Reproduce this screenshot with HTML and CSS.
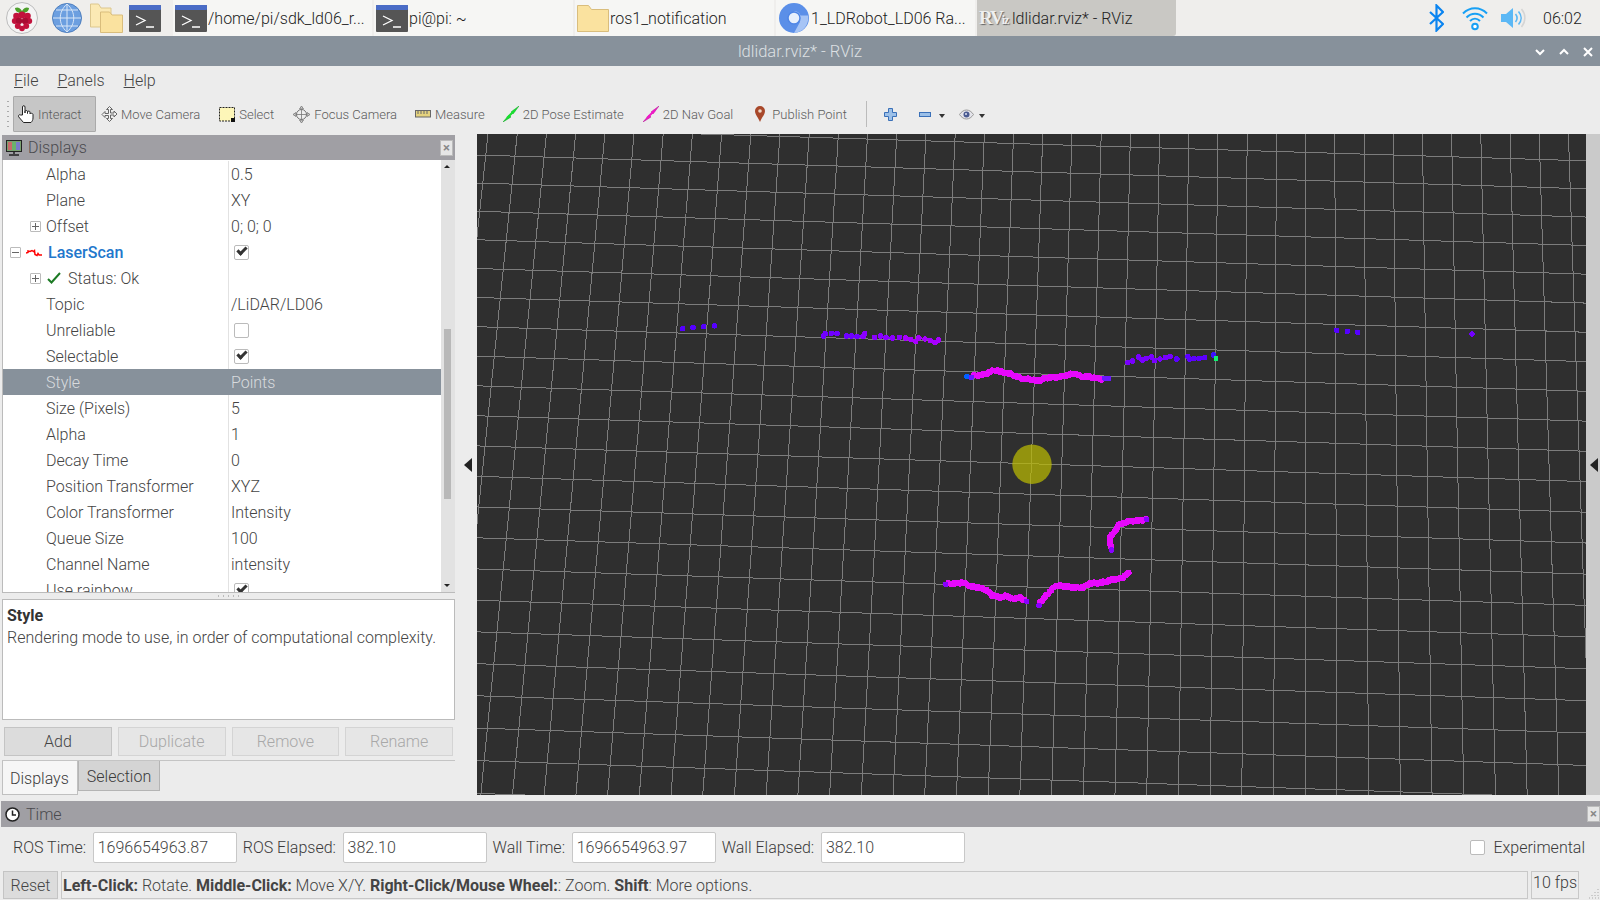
FILE: index.html
```html
<!DOCTYPE html>
<html lang="en">
<head>
    <meta charset="UTF-8">
    <title>ldlidar.rviz* - RViz</title>
    <link rel="stylesheet" href="styles.css">
</head>
<body>

<svg class="defs" width="0" height="0">
    <symbol id="term" viewBox="0 0 32 27">
        <rect width="32" height="27" rx="1" fill="#555"/>
        <rect width="32" height="5" rx="1" fill="#4a6cc6"/>
        <path d="M7 11l9 4.5-9 4.5M17 22h8" fill="none" stroke="#fff" stroke-width="1.3"/>
    </symbol>
    <symbol id="folder" viewBox="0 0 32 27">
        <path d="M.5 26.5V.5h11l3 4h17v22z" fill="#fae29f" stroke="#d9bd7c"/>
    </symbol>
</svg>

<div class="taskbar">
    <div class="launchers">
        <svg class="launch-menu" width="34" height="34" viewBox="0 0 34 34">
            <circle cx="17" cy="17" r="15.5" fill="#f4f4f4" stroke="#bdbdbd"/>
            <path d="M17 10c-3-5-6-3-7-3 0 3 3 5 7 5 4 0 7-2 7-5-1 0-4-2-7 3z" fill="#4ea02c"/>
            <circle cx="17" cy="14" r="3.6" fill="#c2123c"/>
            <circle cx="11.5" cy="15" r="3.3" fill="#c2123c"/>
            <circle cx="22.5" cy="15" r="3.3" fill="#c2123c"/>
            <circle cx="9.8" cy="20" r="3" fill="#c2123c"/>
            <circle cx="24.2" cy="20" r="3" fill="#c2123c"/>
            <circle cx="14" cy="20" r="3.2" fill="#a80d33"/>
            <circle cx="20" cy="20" r="3.2" fill="#a80d33"/>
            <circle cx="12.8" cy="25" r="3" fill="#c2123c"/>
            <circle cx="21.2" cy="25" r="3" fill="#c2123c"/>
            <circle cx="17" cy="27.5" r="2.8" fill="#c2123c"/>
        </svg>
        <svg class="launch-globe" width="30" height="30" viewBox="0 0 30 30">
            <circle cx="15" cy="15" r="14.5" fill="#6c9fe0" stroke="#4f7fbd"/>
            <path d="M1 15h28M4 7h22M4 23h22M15 1v28M15 1c-9 8-9 20 0 28M15 1c9 8 9 20 0 28" fill="none" stroke="#d8e6f7" stroke-width="1"/>
        </svg>
        <svg class="launch-files" width="33" height="30" viewBox="0 0 33 30">
            <path d="M.5 24V1h8l2.500 4h10v19z" fill="#fbe9b4" stroke="#dcc78e"/>
            <path d="M10.500 29.500V9h9l2.500 3h10.500v17.500z" fill="#fae29f" stroke="#d9bd7c"/>
        </svg>
        <svg class="launch-term" width="32" height="27"><use href="#term"/></svg>
    </div>
    <div class="task">
        <svg width="32" height="27"><use href="#term"/></svg>
        <span class="task-name">/home/pi/sdk_ld06_r...</span>
    </div>
    <div class="task">
        <svg width="32" height="27"><use href="#term"/></svg>
        <span class="task-name">pi@pi: ~</span>
    </div>
    <div class="task">
        <svg width="32" height="27"><use href="#folder"/></svg>
        <span class="task-name">ros1_notification</span>
    </div>
    <div class="task">
        <svg class="chrome-icon" width="30" height="30" viewBox="0 0 30 30">
            <circle cx="15" cy="15" r="15" fill="#5b8fe8"/>
            <path d="M15 8a7 7 0 0 1 6.500 4.500H29A15 15 0 0 1 15 30l6-11z" fill="#a6c4f5"/>
            <circle cx="15" cy="15" r="6" fill="#e8f0fc" stroke="#4f86e6" stroke-width="1.500"/>
        </svg>
        <span class="task-name">1_LDRobot_LD06 Ra...</span>
    </div>
    <div class="task task-active">
        <span class="rviz-mark">RV<small>iz</small></span>
        <span class="task-name">ldlidar.rviz* - RViz</span>
    </div>
    <div class="tray">
        <svg class="tray-bt" width="15" height="28" viewBox="0 0 15 28">
            <path d="M1 8l13 12-6.500 6.500V1.500L14 8 1 20" fill="none" stroke="#0a84f0" stroke-width="2.200"/>
        </svg>
        <svg class="tray-wifi" width="26" height="26" viewBox="0 0 26 26">
            <path d="M1 8.500c7-7 17-7 24 0M4.500 12.500c5-5 12-5 17 0M8 16c3-3 7-3 10 0" fill="none" stroke="#18a0f5" stroke-width="2"/>
            <circle cx="13" cy="21.500" r="2.800" fill="#fff" stroke="#18a0f5" stroke-width="2"/>
        </svg>
        <svg class="tray-vol" width="26" height="26" viewBox="0 0 26 26">
            <path d="M1 9h5l7-6v20l-7-6H1z" fill="#5cb8f5"/>
            <path d="M15.500 9c2 2.500 2 5.500 0 8M18.500 6.500c3.500 4 3.500 9 0 13" fill="none" stroke="#5cb8f5" stroke-width="1.600"/>
            <path d="M21.500 4c4.500 5.500 4.500 12.500 0 18" fill="none" stroke="#d5d5d5" stroke-width="1.600"/>
        </svg>
        <span class="clock">06:02</span>
    </div>
</div>

<div class="titlebar">
    <span>ldlidar.rviz* - RViz</span>
    <div class="wm-buttons">
        <svg width="12" height="10" viewBox="0 0 12 10"><path d="M2 3l4 4 4-4" fill="none" stroke="#fff" stroke-width="2"/></svg>
        <svg width="12" height="10" viewBox="0 0 12 10"><path d="M2 7l4-4 4 4" fill="none" stroke="#fff" stroke-width="2"/></svg>
        <svg width="12" height="10" viewBox="0 0 12 10"><path d="M2 1l8 8M10 1l-8 8" fill="none" stroke="#fff" stroke-width="2"/></svg>
    </div>
</div>

<div class="menubar">
    <span><u>F</u>ile</span>
    <span><u>P</u>anels</span>
    <span><u>H</u>elp</span>
</div>

<div class="toolbar">
    <div class="grip"></div>
    <div class="tool tool-on">
        <svg width="17" height="18" viewBox="0 0 17 18"><path d="M4.500 10V2c0-1.800 2.500-1.800 2.500 0v6V6.500c0-1.300 2.500-1.300 2.500 0V8.500 7c0-1.200 2.500-1.200 2.500 0v2c0-1 3-1 3 .5v3.500c0 2-1 3.500-2 4.500H5.500L.8 12c-1-1.500.7-3 1.700-2z" fill="#fff" stroke="#222" stroke-width="1"/></svg>
        Interact
    </div>
    <div class="tool tool-move">
        <svg width="17" height="17" viewBox="0 0 17 17"><path d="M8.500.5l3 3h-2v3.500h3.500v-2l3 3-3 3v-2H9.500v3.500h2l-3 3-3-3h2V9.500H4v2l-3-3 3-3v2h3.500V3.500h-2z" fill="#f2f2f2" stroke="#666"/></svg>
        Move Camera
    </div>
    <div class="tool tool-select">
        <svg width="16" height="15" viewBox="0 0 16 15"><rect x=".5" y=".5" width="15" height="13.500" fill="#fdf6b8" stroke="#222" stroke-dasharray="2 1"/><rect x="12" y="11" width="4" height="4" fill="#111"/></svg>
        Select
    </div>
    <div class="tool tool-focus">
        <svg width="17" height="17" viewBox="0 0 17 17"><circle cx="8.500" cy="8.500" r="5" fill="#eee" stroke="#777"/><path d="M8.500 0l2 3h-4zM8.500 17l2-3h-4zM0 8.500l3-2v4zM17 8.500l-3-2v4zM8.500 3v11M3 8.500h11" fill="#ccc" stroke="#777" stroke-width=".8"/></svg>
        Focus Camera
    </div>
    <div class="tool tool-measure">
        <svg width="16" height="8" viewBox="0 0 16 8"><rect x=".5" y=".5" width="15" height="6.500" fill="#e4d27e" stroke="#666"/><path d="M3 1v3M6 1v3M9 1v3M12 1v3" stroke="#666"/></svg>
        Measure
    </div>
    <div class="tool tool-pose">
        <svg width="16" height="16" viewBox="0 0 16 16"><path d="M0 16l6-7 2 2zM16 0l-8 6 2 2z" fill="#18e030" stroke="#0fa020" stroke-width=".5"/><path d="M4 12l8-8" stroke="#18e030" stroke-width="2"/></svg>
        2D Pose Estimate
    </div>
    <div class="tool tool-nav">
        <svg width="16" height="16" viewBox="0 0 16 16"><path d="M0 16l6-7 2 2zM16 0l-8 6 2 2z" fill="#f018c8" stroke="#b01090" stroke-width=".5"/><path d="M4 12l8-8" stroke="#f018c8" stroke-width="2"/></svg>
        2D Nav Goal
    </div>
    <div class="tool tool-point">
        <svg width="10" height="16" viewBox="0 0 10 16"><path d="M5 16C3 11 0 8.500 0 5a5 5 0 0 1 10 0c0 3.500-3 6-5 11z" fill="#a8482a"/><circle cx="5" cy="5" r="1.800" fill="#f0d8c8"/></svg>
        Publish Point
    </div>
    <div class="tool-sep"></div>
    <svg class="view-plus" width="13" height="13" viewBox="0 0 13 13"><path d="M4.500.5h4v4h4v4h-4v4h-4v-4h-4v-4h4z" fill="#9cc0e8" stroke="#3a70b8"/></svg>
    <svg class="view-minus" width="12" height="5" viewBox="0 0 12 5"><rect x=".5" y=".5" width="11" height="4" fill="#9cc0e8" stroke="#3a70b8"/></svg>
    <span class="caret caret-minus"></span>
    <svg class="view-eye" width="15" height="11" viewBox="0 0 15 11"><path d="M.5 5.500c4-6 10-6 14 0-4 6-10 6-14 0z" fill="#e4e4ea" stroke="#999"/><circle cx="7.500" cy="5.500" r="3" fill="#4a5a90"/><circle cx="7" cy="5" r="1" fill="#dfe4f2"/></svg>
    <span class="caret caret-eye"></span>
</div>

<div class="main">
    <div class="dock">
        <div class="panel-head">
            <svg width="16" height="16" viewBox="0 0 16 16">
                <rect x=".5" y=".5" width="15" height="11" fill="#7aa070" stroke="#222"/>
                <rect x="2" y="2" width="4" height="8" fill="#c86a6a"/>
                <rect x="6" y="2" width="4" height="8" fill="#6ab26a"/>
                <rect x="10" y="2" width="4" height="8" fill="#7a7ac8"/>
                <path d="M8 12v2M3 15h10" stroke="#222" stroke-width="1.500"/>
            </svg>
            <span class="panel-title">Displays</span>
            <span class="panel-close">&times;</span>
        </div>
        <div class="tree-wrap">
            <div class="tree">
                <div class="row"><div class="name">Alpha</div><div class="value">0.5</div></div>
                <div class="row"><div class="name">Plane</div><div class="value">XY</div></div>
                <div class="row"><div class="name name-exp"><span class="expander plus"></span>Offset</div><div class="value">0; 0; 0</div></div>
                <div class="row">
                    <div class="name name-top">
                        <span class="expander"></span>
                        <svg width="16" height="9" viewBox="0 0 16 9"><path d="M0 5l2-.5v-1.500l2 .5 2-1 1.500 1 1-1 .5 4 2 1 1-2 1 1.500h3" fill="none" stroke="#f00" stroke-width="1.500"/></svg>
                        <b class="display-name">LaserScan</b>
                    </div>
                    <div class="value"><span class="check on"></span></div>
                </div>
                <div class="row">
                    <div class="name name-exp">
                        <span class="expander plus"></span>
                        <svg class="ok-mark" width="14" height="12" viewBox="0 0 14 12"><path d="M1 7l3.500 3.500L13 1" fill="none" stroke="#1c7a24" stroke-width="2"/></svg>
                        Status: Ok
                    </div>
                    <div class="value"></div>
                </div>
                <div class="row"><div class="name">Topic</div><div class="value">/LiDAR/LD06</div></div>
                <div class="row"><div class="name">Unreliable</div><div class="value"><span class="check"></span></div></div>
                <div class="row"><div class="name">Selectable</div><div class="value"><span class="check on"></span></div></div>
                <div class="row row-sel"><div class="name">Style</div><div class="value">Points</div></div>
                <div class="row"><div class="name">Size (Pixels)</div><div class="value">5</div></div>
                <div class="row"><div class="name">Alpha</div><div class="value">1</div></div>
                <div class="row"><div class="name">Decay Time</div><div class="value">0</div></div>
                <div class="row"><div class="name">Position Transformer</div><div class="value">XYZ</div></div>
                <div class="row"><div class="name">Color Transformer</div><div class="value">Intensity</div></div>
                <div class="row"><div class="name">Queue Size</div><div class="value">100</div></div>
                <div class="row"><div class="name">Channel Name</div><div class="value">intensity</div></div>
                <div class="row"><div class="name">Use rainbow</div><div class="value"><span class="check on"></span></div></div>
            </div>
            <div class="scrollbar">
                <span class="arrow-up"></span>
                <div class="thumb"></div>
                <span class="arrow-down"></span>
            </div>
        </div>
        <div class="dock-handle"></div>
        <div class="help">
            <b>Style</b><br>
            Rendering mode to use, in order of computational complexity.
        </div>
        <div class="dock-buttons">
            <div class="btn">Add</div>
            <div class="btn btn-off">Duplicate</div>
            <div class="btn btn-off">Remove</div>
            <div class="btn btn-off">Rename</div>
        </div>
        <div class="tabs">
            <div class="tab tab-on">Displays</div>
            <div class="tab">Selection</div>
        </div>
    </div>

    <div class="split-left"><span class="tri-left"></span></div>

    <svg id="view" class="view" width="1109" height="661" viewBox="477 134 1109 661"></svg>

    <div class="split-right"><span class="tri-right"></span></div>
</div>

<div class="time-panel">
    <div class="panel-head time-head">
        <svg width="15" height="15" viewBox="0 0 15 15"><circle cx="7.500" cy="7.500" r="6.500" fill="#fff" stroke="#222" stroke-width="1.500"/><path d="M7.500 3.500v4.500h3.500" fill="none" stroke="#222" stroke-width="1.500"/></svg>
        <span class="panel-title">Time</span>
        <span class="panel-close">&times;</span>
    </div>
    <div class="time-row">
        <label>ROS Time:</label><div class="field">1696654963.87</div>
        <label>ROS Elapsed:</label><div class="field">382.10</div>
        <label>Wall Time:</label><div class="field">1696654963.97</div>
        <label>Wall Elapsed:</label><div class="field">382.10</div>
        <div class="experimental"><span class="check"></span>Experimental</div>
    </div>
    <div class="status-row">
        <div class="btn reset">Reset</div>
        <div class="status-msg"><b>Left-Click:</b> Rotate. <b>Middle-Click:</b> Move X/Y. <b>Right-Click/Mouse Wheel:</b>: Zoom. <b>Shift</b>: More options.</div>
        <div class="fps">10 fps</div>
        <svg class="size-grip" width="12" height="12" viewBox="0 0 12 12"><path d="M10 2v1M7 5v1M10 5v1M4 8v1M7 8v1M10 8v1M1 11h1M4 11h1M7 11h1M10 11h1" stroke="#aaa"/></svg>
    </div>
</div>

<script src="script.js"></script>
</body>
</html>
```

FILE: styles.css
```css
html, body {
    margin: 0;
    padding: 0;
}
body {
    width: 1600px;
    height: 900px;
    overflow: hidden;
    background-color: #ececec;
    font-family: Roboto, "Liberation Sans", sans-serif;
    font-weight: 300;
    font-size: 16px;
    color: #3a3a3a;
}
b {
    font-weight: 700;
}
.defs {
    position: absolute;
}

/* top panel of the desktop */
.taskbar {
    height: 36px;
    display: flex;
    align-items: center;
    background-color: #efeeec;
    font-size: 16px;
    color: #222;
}
.launchers {
    width: 173px;
    height: 36px;
    flex: none;
    display: flex;
    align-items: center;
}
.launch-menu { margin-left: 5px; }
.launch-globe { margin-left: 13px; }
.launch-files { margin-left: 8px; }
.launch-term { margin-left: 6px; }
.task {
    width: 199px;
    height: 36px;
    margin-right: 2px;
    flex: none;
    display: flex;
    align-items: center;
    gap: 1px;
    padding-left: 2px;
    box-sizing: border-box;
    background-color: #f6f6f4;
    white-space: nowrap;
    overflow: hidden;
}
.chrome-icon {
    margin-left: 1px;
    margin-right: 1px;
}
.task-active {
    background-color: #c9c8c4;
    border-radius: 0 0 3px 0;
}
.rviz-mark {
    width: 32px;
    font-family: "Liberation Serif", serif;
    font-size: 19px;
    font-weight: 700;
    letter-spacing: -2px;
    color: #efefef;
    text-shadow: 1px 1px 1px #666;
}
.rviz-mark small {
    font-size: 12px;
    letter-spacing: -1px;
}
.tray {
    flex: 1;
    display: flex;
    align-items: center;
    padding-left: 251px;
}
.tray-bt { margin-right: 18px; }
.tray-wifi { margin-right: 12px; }
.tray-vol { margin-right: 17px; }

/* window frame */
.titlebar {
    position: relative;
    height: 30px;
    display: flex;
    align-items: center;
    justify-content: center;
    background-color: #87919b;
    color: #dde0e3;
    font-size: 16.500px;
}
.wm-buttons {
    position: absolute;
    right: 6px;
    top: 11px;
    display: flex;
    gap: 12px;
}
.wm-buttons svg {
    display: block;
}
.menubar {
    height: 30px;
    display: flex;
    align-items: center;
    padding-left: 14px;
    padding-bottom: 2px;
    box-sizing: border-box;
    gap: 19px;
    color: #444;
}
.toolbar {
    height: 38px;
    display: flex;
    align-items: center;
    padding-bottom: 2px;
    box-sizing: border-box;
    font-size: 13px;
    color: #5c5c5c;
}
.grip {
    width: 2px;
    height: 30px;
    margin-left: 7px;
    margin-right: 4px;
    background-image: radial-gradient(circle, #aaa 1px, transparent 1px);
    background-size: 2px 5px;
}
.tool {
    display: flex;
    align-items: center;
    gap: 4px;
    white-space: nowrap;
}
.tool-on {
    width: 83px;
    height: 36px;
    padding-left: 4px;
    gap: 3px;
    box-sizing: border-box;
    background-color: #c6c6c6;
    border: 1px solid #aaa;
    border-radius: 1px;
}
.tool-move { margin-left: 5px; gap: 3px; }
.tool-select { margin-left: 19px; }
.tool-focus { margin-left: 19px; }
.tool-measure { margin-left: 18px; }
.tool-pose { margin-left: 18px; }
.tool-nav { margin-left: 19px; }
.tool-point { margin-left: 22px; gap: 7px; }
.tool-sep {
    width: 1px;
    height: 26px;
    margin-left: 19px;
    background-color: #bbb;
}
.view-plus { margin-left: 17px; }
.view-minus { margin-left: 22px; }
.view-eye { margin-left: 14px; }
.caret {
    width: 0;
    height: 0;
    margin-top: 4px;
    margin-left: 8px;
    border-left: 3.500px solid transparent;
    border-right: 3.500px solid transparent;
    border-top: 4px solid #333;
}
.caret-eye { margin-left: 5px; }

/* main area */
.main {
    height: 661px;
    display: flex;
}
.dock {
    width: 453px;
    margin-left: 2px;
    flex: none;
    display: flex;
    flex-direction: column;
}
.panel-head {
    height: 25px;
    margin-top: 1px;
    flex: none;
    display: flex;
    align-items: center;
    padding: 0 2px 0 4px;
    gap: 6px;
    background-color: #a09fa4;
    color: #4a4a4e;
}
.panel-title {
    flex: 1;
}
.panel-close {
    width: 11px;
    height: 14px;
    line-height: 13px;
    text-align: center;
    font-size: 13px;
    font-weight: 700;
    color: #888;
    background-color: #e6e6e6;
    border: 1px solid #bbb;
}
.tree-wrap {
    height: 432px;
    flex: none;
    display: flex;
    background-color: #fff;
    border-left: 1px solid #bbb;
    border-bottom: 1px solid #bbb;
    overflow: hidden;
}
.tree {
    width: 438px;
    padding-top: 1px;
    flex: none;
}
.row {
    height: 26px;
    display: grid;
    grid-template-columns: 226px 1fr;
    align-items: center;
    box-sizing: border-box;
    color: #444;
}
.row > div {
    height: 26px;
    display: flex;
    align-items: center;
}
.name {
    padding-left: 43px;
    border-right: 1px solid #e2e2e2;
}
.name-exp {
    padding-left: 27px;
}
.name-top {
    padding-left: 7px;
}
.name-top svg {
    margin-right: 6px;
}
.display-name {
    font-weight: 500;
    color: #2277cc;
}
.value {
    padding-left: 2px;
}
.row-sel {
    background-color: #87919b;
    color: #d8dbde;
}
.row-sel .name {
    border-right-color: #87919b;
}
.expander {
    position: relative;
    width: 9px;
    height: 9px;
    margin-right: 5px;
    flex: none;
    background-color: #fff;
    border: 1px solid #bbb;
    border-radius: 1px;
}
.expander::before {
    content: "";
    position: absolute;
    left: 1px;
    right: 1px;
    top: 4px;
    height: 1px;
    background-color: #666;
}
.plus::after {
    content: "";
    position: absolute;
    top: 1px;
    bottom: 1px;
    left: 4px;
    width: 1px;
    background-color: #666;
}
.ok-mark {
    margin: 0 7px 0 1px;
}
.check {
    position: relative;
    display: inline-block;
    width: 13px;
    height: 13px;
    margin-left: 3px;
    background-color: #fff;
    border: 1px solid #bbb;
    border-radius: 2px;
}
.check.on::after {
    content: "";
    position: absolute;
    left: 1.500px;
    top: 1.500px;
    width: 10px;
    height: 6px;
    border-left: 3px solid #333;
    border-bottom: 3px solid #333;
    transform: rotate(-45deg);
    box-sizing: border-box;
}
.scrollbar {
    position: relative;
    flex: 1;
    background-color: #e2e2e2;
}
.arrow-up, .arrow-down {
    position: absolute;
    left: 3px;
    width: 0;
    height: 0;
    border-left: 3px solid transparent;
    border-right: 3px solid transparent;
}
.arrow-up {
    top: 5px;
    border-bottom: 3px solid #222;
}
.arrow-down {
    bottom: 5px;
    border-top: 3px solid #222;
}
.thumb {
    position: absolute;
    top: 169px;
    left: 3px;
    width: 7px;
    height: 170px;
    background-color: #b8b8b8;
}
.dock-handle {
    height: 6px;
    flex: none;
    background-image: radial-gradient(circle, #bbb 1px, transparent 1px);
    background-size: 5px 6px;
    background-repeat: repeat-x;
    background-position: center;
    background-clip: content-box;
    padding: 0 214px;
}
.help {
    height: 121px;
    flex: none;
    padding: 5px 4px;
    box-sizing: border-box;
    background-color: #fff;
    border: 1px solid #bbb;
    line-height: 22px;
    color: #444;
}
.help b {
    color: #333;
}
.dock-buttons {
    margin-top: 7px;
    padding: 0 2px;
    height: 29px;
    flex: none;
    display: grid;
    grid-template-columns: repeat(4, 1fr);
    gap: 6px;
}
.btn {
    display: flex;
    align-items: center;
    justify-content: center;
    background-color: #dcdcdc;
    border: 1px solid #c4c4c4;
    color: #444;
}
.btn-off {
    background-color: #e6e6e6;
    color: #a8a8a8;
    border-color: #d4d4d4;
}
.tabs {
    margin-top: 4px;
    height: 35px;
    flex: none;
    display: flex;
    align-items: flex-start;
    border-top: 1px solid #c4c4c4;
}
.tab {
    height: 30px;
    padding: 2px 8px 0;
    box-sizing: border-box;
    display: flex;
    align-items: center;
    background-color: #d4d4d4;
    border: 1px solid #b4b4b4;
    border-top: none;
}
.tab-on {
    height: 34px;
    background-color: #f6f6f6;
    border-color: #c0c0c0;
    padding: 2px 8px 0 7px;
}
.split-left {
    width: 22px;
    flex: none;
    display: flex;
    align-items: center;
    justify-content: flex-end;
    padding-right: 5px;
    box-sizing: border-box;
}
.tri-left {
    width: 0;
    height: 0;
    border-top: 7px solid transparent;
    border-bottom: 7px solid transparent;
    border-right: 8px solid #222;
}
.view {
    display: block;
    flex: none;
    background-color: #2f2f2f;
}
.split-right {
    flex: 1;
    display: flex;
    align-items: center;
    justify-content: center;
    background-color: #cacaca;
}
.tri-right {
    width: 0;
    height: 0;
    margin-left: 2px;
    border-top: 7px solid transparent;
    border-bottom: 7px solid transparent;
    border-right: 8px solid #222;
}

/* bottom panel */
.time-panel {
    margin-top: 6px;
}
.time-head {
    height: 26px;
    margin: 0 0 0 1px;
    padding-right: 0;
}
.time-row {
    height: 41px;
    display: flex;
    align-items: center;
    padding-left: 13px;
    box-sizing: border-box;
}
.time-row label {
    margin-right: 6.700px;
}
.field {
    width: 138px;
    height: 29px;
    margin-right: 6px;
    padding-left: 4px;
    line-height: 29px;
    background-color: #fff;
    border: 1px solid #c8c8c8;
    border-radius: 2px;
    color: #444;
}
.experimental {
    margin-left: auto;
    padding-right: 15px;
    display: flex;
    align-items: center;
    gap: 8px;
}
.experimental .check {
    margin: 0;
}
.status-row {
    height: 28px;
    margin-top: 3px;
    display: flex;
    padding-left: 3px;
}
.reset {
    width: 53px;
    margin-right: 3px;
    padding-top: 1px;
}
.status-msg {
    width: 1465px;
    padding-left: 1px;
    line-height: 28px;
    height: 26px;
    border: 1px solid #c8c8c8;
    color: #444;
    white-space: nowrap;
}
.fps {
    width: 46px;
    margin-left: 3px;
    line-height: 22px;
    text-align: center;
    border: 1px solid #c8c8c8;
}
.size-grip {
    margin-top: 16px;
    margin-left: 9px;
}
```

FILE: script.js
```js
// draws the 3D view: warped grid, robot marker and laser points
const svgNS = 'http://www.w3.org/2000/svg';
const view = document.getElementById('view');

function add(tag, attrs) {
    const el = document.createElementNS(svgNS, tag);
    for (const key in attrs) {
        el.setAttribute(key, attrs[key]);
    }
    view.appendChild(el);
    return el;
}

// grid lines get wider apart towards the bottom of the view
for (let k = -2; k < 40; k++) {
    const top = 488 + k * 29.2;
    const bottom = 1310 + (top - 1310) * (1 + 661 * 0.00013);
    add('line', { x1: top, y1: 134, x2: bottom, y2: 795, stroke: '#7c7c7c', 'shape-rendering': 'crispEdges' });
}
for (let k = -2; k < 23; k++) {
    const y = 155 + 27.9 * k + 0.119 * k * k;
    const slope = 0.0305 + 0.00017 * k;
    add('line', { x1: 477, y1: y, x2: 1586, y2: y + slope * 1109, stroke: '#7c7c7c', 'shape-rendering': 'crispEdges' });
}

add('circle', { cx: 1032, cy: 464.3, r: 19.7, fill: 'rgba(190, 190, 0, 0.7)' });

function dots(points, color, r = 2.8) {
    points.forEach(p => {
        add('circle', { cx: p[0], cy: p[1], r: r, fill: color, 'shape-rendering': 'crispEdges' });
    });
}

// a dense run of points between the given corners, with a little noise
function trace(points) {
    const out = [];
    for (let i = 0; i < points.length - 1; i++) {
        const a = points[i];
        const b = points[i + 1];
        const steps = Math.ceil(Math.hypot(b[0] - a[0], b[1] - a[1]) / 2);
        for (let s = 0; s < steps; s++) {
            const wobble = ((out.length * 7) % 5 - 2) * 0.4;
            out.push([a[0] + (b[0] - a[0]) * s / steps, a[1] + (b[1] - a[1]) * s / steps + wobble]);
        }
    }
    dots(out, '#e608fb', 3);
}

// corners were read off crops of different scale
const crop8 = list => list.map(p => [660 + p[0] / 2.8, 310 + p[1] / 3]);
const crop9 = list => list.map(p => [920 + p[0] / 3, 430 + p[1] / 3]);

dots([[682.7, 328.7], [693, 327.5], [703.7, 326.7], [714.5, 325.7]], '#5500ff');
dots([[1336.7, 330.3], [1347.3, 331.3], [1357.7, 332.3]], '#5500ff');
dots([[1472, 334]], '#7200ff');

dots(crop8([[458, 78], [463, 71], [480, 70], [496, 70], [522, 78], [537, 78], [552, 80]]), '#6f00ff');
dots(crop8([[568, 80], [573, 71], [601, 82], [618, 78], [633, 82], [650, 84], [670, 82]]), '#8a00ff');
dots(crop8([[688, 84], [702, 88], [716, 94], [725, 84], [742, 87], [757, 92], [770, 98], [780, 90]]), '#a800ff');

dots(crop8([[1310, 157], [1322, 153], [1340, 141], [1350, 150], [1362, 145], [1376, 141], [1385, 152], [1400, 147], [1415, 143], [1428, 140]]), '#7800ff');
dots(crop8([[1447, 147], [1478, 140], [1482, 147], [1495, 145], [1510, 145], [1525, 143]]), '#5c00ff');
dots(crop8([[1550, 135]]), '#3c10ff');

trace(crop8([[880, 197], [900, 195], [915, 190], [925, 185], [940, 180], [955, 186], [975, 190], [990, 195], [1005, 203], [1020, 207], [1040, 208], [1060, 214], [1075, 205], [1095, 202], [1115, 202], [1135, 197], [1160, 190], [1180, 200], [1200, 200], [1220, 204], [1240, 208]]));
dots(crop8([[860, 199]]), '#0060ff');
dots(crop8([[872, 202], [1245, 205], [1256, 205]]), '#6a18ff');

trace(crop9([[85, 461], [110, 460], [130, 457], [150, 468], [175, 473], [200, 480], [215, 495], [240, 503], [260, 497], [275, 507], [300, 503], [318, 512]]));
trace(crop9([[360, 518], [385, 490], [405, 468], [430, 468], [460, 473], [490, 472], [510, 460], [545, 458], [580, 448], [605, 445], [630, 425]]));
trace(crop9([[678, 268], [655, 272], [630, 273], [595, 285], [585, 305], [570, 320], [570, 340], [575, 358]]));
dots(crop9([[77, 463], [320, 514], [357, 527], [680, 268], [575, 360]]), '#8800ff');

add('rect', { x: 1214, y: 356, width: 4, height: 5, fill: '#10f070' });
```
